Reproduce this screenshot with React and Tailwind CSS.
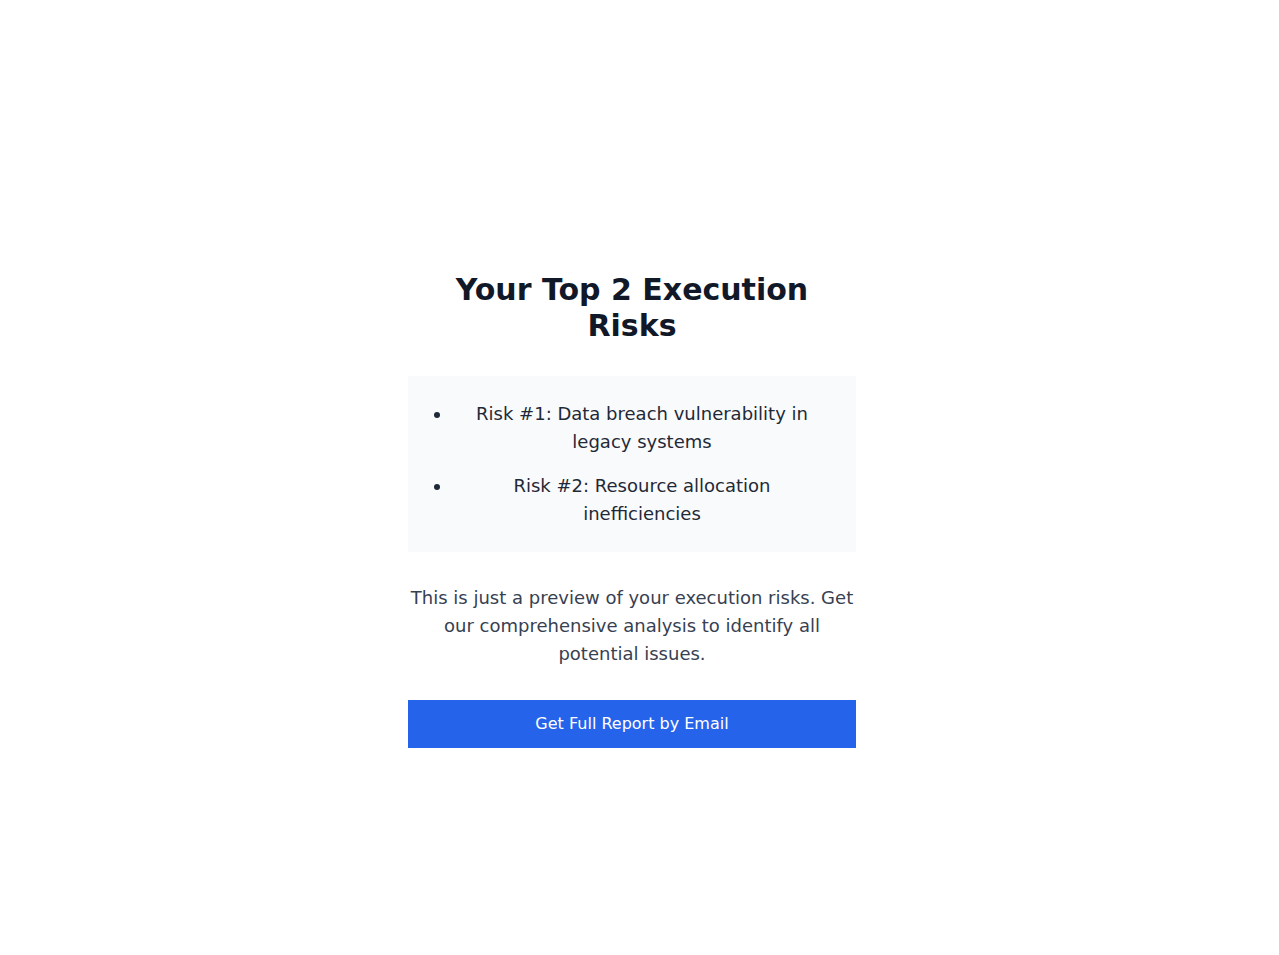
export default function App() {
  return (
    <div className="py-8 pr-[15px] bg-white font-['DejaVu_Sans',sans-serif]">
      <div className="min-h-screen flex items-center justify-center">
        <div className="w-full max-w-md text-center">
          <h1 className="text-3xl font-bold text-[#111827] mb-8">Your Top 2 Execution Risks</h1>

          <div className="bg-[#f9fafb] p-6 mb-8">
            <ul className="list-disc pl-5 space-y-4 text-lg text-[#1f2937]">
              <li>Risk #1: Data breach vulnerability in legacy systems</li>
              <li>Risk #2: Resource allocation inefficiencies</li>
            </ul>
          </div>

          <p className="text-lg text-[#374151] mb-8">
            This is just a preview of your execution risks. Get our comprehensive analysis to identify all potential issues.
          </p>

          <button className="w-full bg-[#2563eb] text-white py-3 text-base">Get Full Report by Email</button>
        </div>
      </div>
    </div>
  );
}
